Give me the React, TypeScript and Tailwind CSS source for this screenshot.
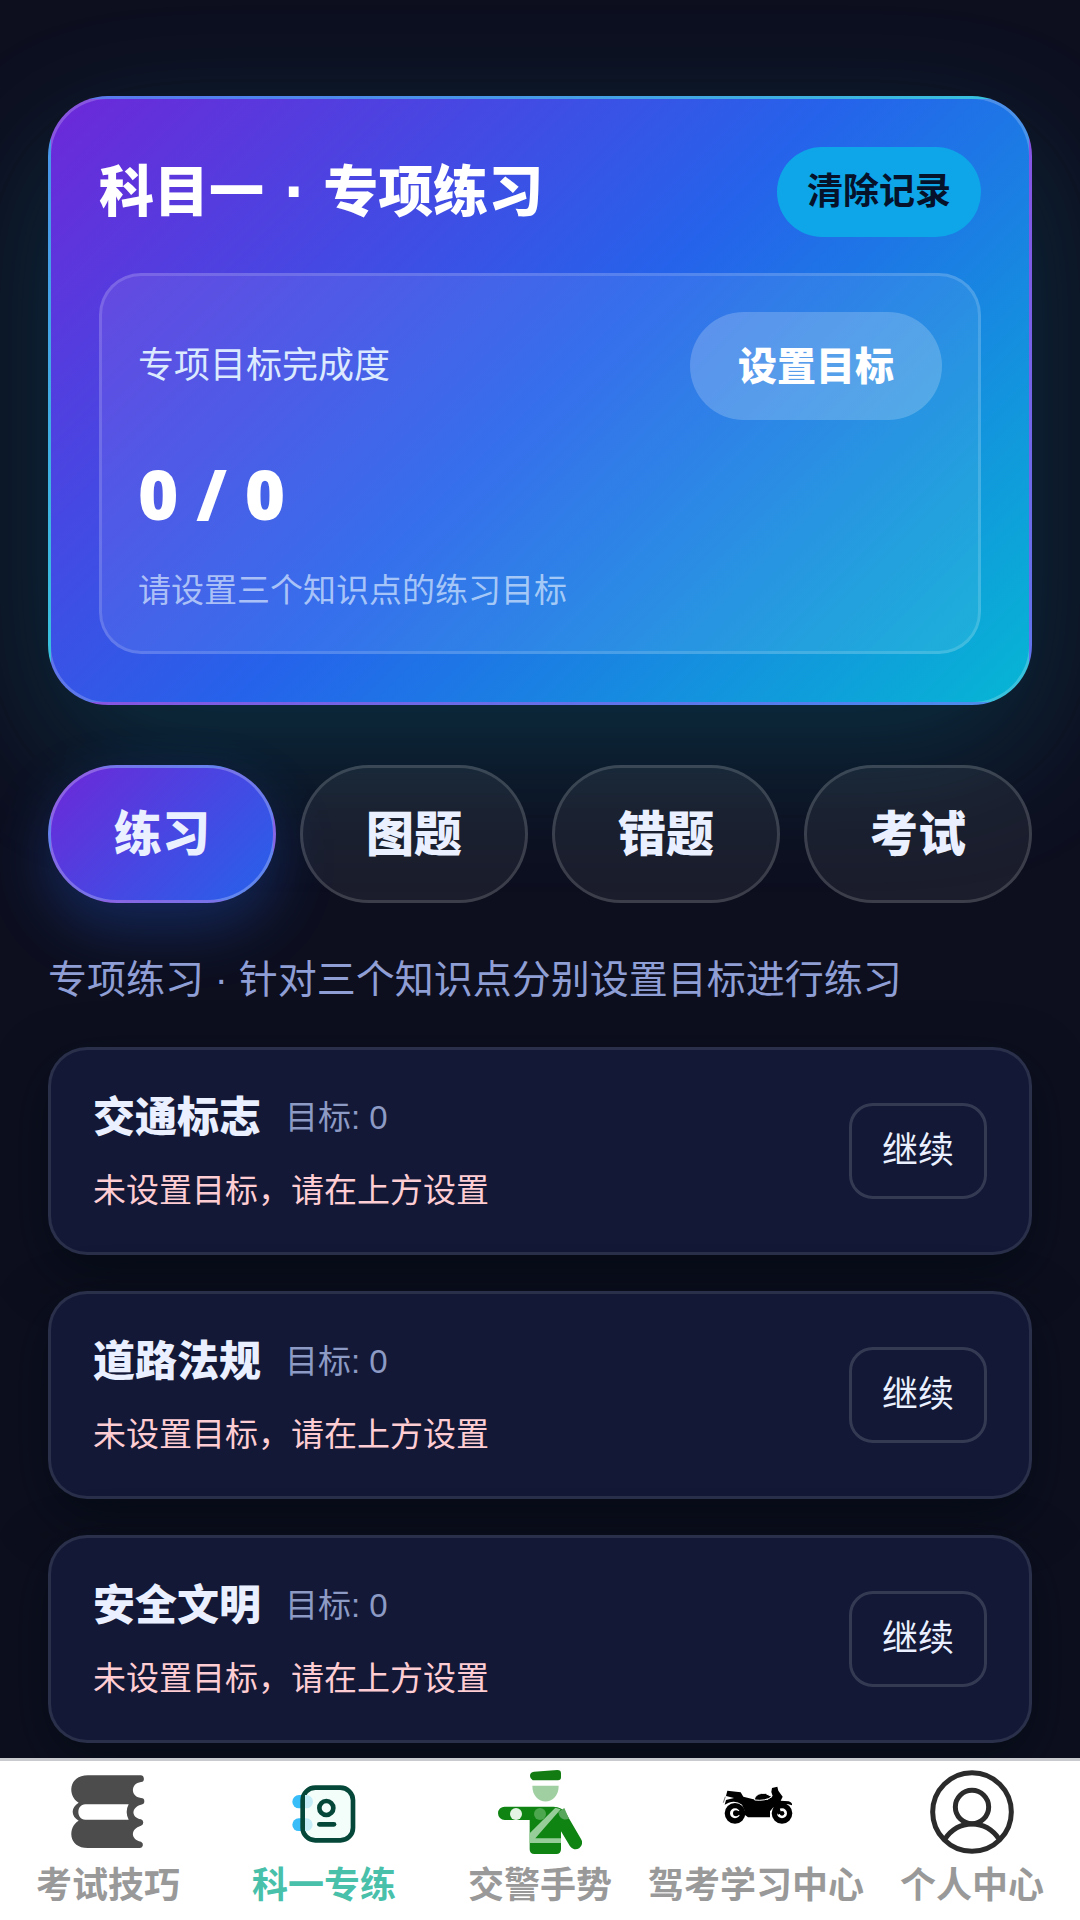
import React, { useState } from 'react';

const topics = [
  { title: '交通标志', target: 0 },
  { title: '道路法规', target: 0 },
  { title: '安全文明', target: 0 },
];

const tabs = ['练习', '图题', '错题', '考试'];

const BookIcon = () => (
  <svg className="w-[84px] h-[84px]" viewBox="0 0 252 252">
    <path
      fill="#4c4c4c"
      d="M66 16H222a10 10 0 0 1 3 20C193 40 193 80 225 84a10 10 0 0 1 0 20C195 112 195 142 225 148a10 10 0 0 1 0 19C193 176 193 208 225 215a10 10 0 0 1-3 19H66C5 234 5 170 38 152C14 138 14 112 38 98C5 80 5 16 66 16Z"
    />
    <path fill="#fff" d="M58 103H188C180 118 180 134 188 149H58C30 149 30 103 58 103Z" />
  </svg>
);

const NotebookIcon = () => (
  <svg className="w-[84px] h-[84px]" viewBox="0 0 252 252">
    <rect x="31" y="75" width="61" height="40" rx="20" fill="#38bdf8" />
    <rect x="31" y="145" width="61" height="38" rx="19" fill="#38bdf8" />
    <rect x="62" y="53" width="151" height="158" rx="38" fill="#f3fdfa" stroke="#05483a" strokeWidth="14" />
    <path fill="#c5edf8" d="M69 75h4a19 19 0 0 1 0 40h-4zM69 145h4a19 19 0 0 1 0 38h-4z" />
    <circle cx="133" cy="114" r="21" fill="none" stroke="#05483a" strokeWidth="14" />
    <path d="M112 163h44" stroke="#05483a" strokeWidth="14" strokeLinecap="round" />
  </svg>
);

const PoliceIcon = () => (
  <svg className="w-[84px] h-[84px]" viewBox="0 0 252 252">
    <path fill="#127c12" d="M108 5L178 0Q189 0 189 10V22Q189 31 180 31H104Q96 26 96 18Q96 6 108 5Z" />
    <path fill="#a0d0a1" d="M103 47H182C182 110 103 110 103 47Z" />
    <path
      fill="#0f8412"
      d="M20 110H166Q192 110 204 130L249 207A19 19 0 0 1 216 229L189 184V238Q189 252 175 252H109Q95 252 95 238V150H20A20 20 0 0 1 20 110Z"
    />
    <circle cx="54" cy="132" r="18" fill="#e4f3e4" />
    <circle cx="126" cy="132" r="18" fill="#4ca74f" />
    <path fill="#58a65b" d="M181 126L199 114L213 146C200 152 184 148 181 126Z" />
    <path fill="#97cd99" d="M95 190L172 113L188 118L112 205H189V219H95Z" />
  </svg>
);

const MotorbikeIcon = () => (
  <svg className="w-[84px] h-[84px]" viewBox="0 0 252 252">
    <circle cx="63" cy="130" r="23" fill="none" stroke="#000" strokeWidth="16" />
    <circle cx="204" cy="130" r="23" fill="none" stroke="#000" strokeWidth="16" />
    <circle cx="66" cy="130" r="9" />
    <circle cx="204" cy="130" r="7" />
    {/* frame and engine */}
    <path d="M40 62L80 67L88 80L118 88L160 90L176 78L172 66L174 54L190 50L193 62L206 80L200 92L224 94Q236 98 234 106Q212 98 194 106L202 130L192 134L178 112L168 124V142H102L94 136L66 134V124L92 122L84 104Q66 90 44 98L32 104L36 90L60 84L36 78Z" />
    <path d="M122 84Q130 68 154 70L174 80Q154 94 122 90Z" stroke="#fff" strokeWidth="3" />
    <path d="M34 80L28 98" stroke="#777" strokeWidth="3" />
  </svg>
);

const UserIcon = () => (
  <svg className="w-[84px] h-[84px]" viewBox="0 0 252 252" fill="none" stroke="#2b2b2b" strokeWidth="15">
    <circle cx="126" cy="126" r="118" />
    <circle cx="126" cy="111" r="50" />
    <path d="M44 208C66 176 94 162 126 162S186 176 208 208" />
  </svg>
);

const navItems = [
  { label: '考试技巧', icon: <BookIcon /> },
  { label: '科一专练', icon: <NotebookIcon /> },
  { label: '交警手势', icon: <PoliceIcon /> },
  { label: '驾考学习中心', icon: <MotorbikeIcon /> },
  { label: '个人中心', icon: <UserIcon /> },
];

const App: React.FC = () => {
  const [activeTab, setActiveTab] = useState('练习');
  const [activeNav, setActiveNav] = useState('科一专练');

  return (
    <div className="min-h-screen bg-[#0d0f1f] font-['Liberation_Sans','Noto_Sans_CJK_SC',sans-serif] text-[#eaf0ff]">
      <main className="px-12 pt-24 pb-[177px]">
        {/* Summary card */}
        <section className="p-12 rounded-[60px] border-[3px] border-white/20 bg-[linear-gradient(135deg,#6d28d9,#2563eb_50%,#06b6d4)] shadow-[0_48px_144px_rgba(6,182,212,0.2)]">
          <div className="flex items-center justify-between">
            <h1 className="font-['DejaVu_Sans','Noto_Sans_CJK_SC',sans-serif] text-[55px] leading-[78px] font-black text-white">
              科目一 · 专项练习
            </h1>
            <button className="h-[90px] px-[30px] rounded-full bg-[#0ea5e9] text-[36px] leading-[52px] font-bold text-[#06122a]">
              清除记录
            </button>
          </div>

          <div className="mt-9 p-9 rounded-[42px] border-[3px] border-white/15 bg-white/8">
            <div className="flex items-center justify-between">
              <span className="text-[36px] leading-[52px] text-[#dbeafe]">专项目标完成度</span>
              <button className="h-[108px] px-12 rounded-full bg-white/20 text-[39px] leading-[57px] font-black text-white">
                设置目标
              </button>
            </div>
            <div className="mt-6 font-['Open_Sans',sans-serif] text-[69px] leading-[99px] font-extrabold text-white">
              0 / 0
            </div>
            <p className="mt-6 text-[33px] leading-[48px] text-[#dbeafe]/70">请设置三个知识点的练习目标</p>
          </div>
        </section>

        {/* Mode tabs */}
        <div className="mt-[60px] grid grid-cols-4 gap-6">
          {tabs.map((tab) => (
            <button
              key={tab}
              onClick={() => setActiveTab(tab)}
              className={`h-[138px] rounded-full border-[3px] text-[48px] leading-[69px] font-black ${
                activeTab === tab
                  ? 'border-white/25 bg-[linear-gradient(135deg,#6d28d9,#2563eb)] shadow-[0_24px_60px_rgba(37,99,235,0.3)]'
                  : 'border-white/15 bg-white/6'
              }`}
            >
              {tab}
            </button>
          ))}
        </div>

        <p className="mt-12 text-[39px] leading-[57px] text-[#8f9fd6]">专项练习 · 针对三个知识点分别设置目标进行练习</p>

        {/* Topic list */}
        <div className="mt-[39px] flex flex-col gap-9">
          {topics.map((topic) => (
            <article
              key={topic.title}
              className="flex items-center justify-between px-[42px] py-9 rounded-[39px] border-[3px] border-white/10 bg-[#121836] shadow-[0_18px_54px_rgba(0,10,16,0.6)]"
            >
              <div>
                <div className="flex items-center gap-6">
                  <h2 className="text-[42px] leading-[64px] font-black">{topic.title}</h2>
                  <span className="text-[33px] leading-[48px] text-[#8c9ac4]">目标: {topic.target}</span>
                </div>
                <p className="mt-4 text-[33px] leading-[50px] text-[#fecdd3]">未设置目标，请在上方设置</p>
              </div>
              <button className="h-24 px-[30px] rounded-3xl border-[3px] border-white/15 text-[36px] leading-[52px]">
                继续
              </button>
            </article>
          ))}
        </div>
      </main>

      <nav className="fixed inset-x-0 bottom-0 h-[162px] pt-[9px] grid grid-cols-5 bg-white border-t-[3px] border-[#c8cad0]">
        {navItems.map((item) => (
          <button
            key={item.label}
            onClick={() => setActiveNav(item.label)}
            className="flex flex-col items-center whitespace-nowrap"
          >
            {item.icon}
            <span
              className={`mt-1.5 text-[36px] leading-[52px] font-bold ${
                activeNav === item.label ? 'text-[#48c0aa]' : 'text-[#999999]'
              }`}
            >
              {item.label}
            </span>
          </button>
        ))}
      </nav>
    </div>
  );
};

export default App;
